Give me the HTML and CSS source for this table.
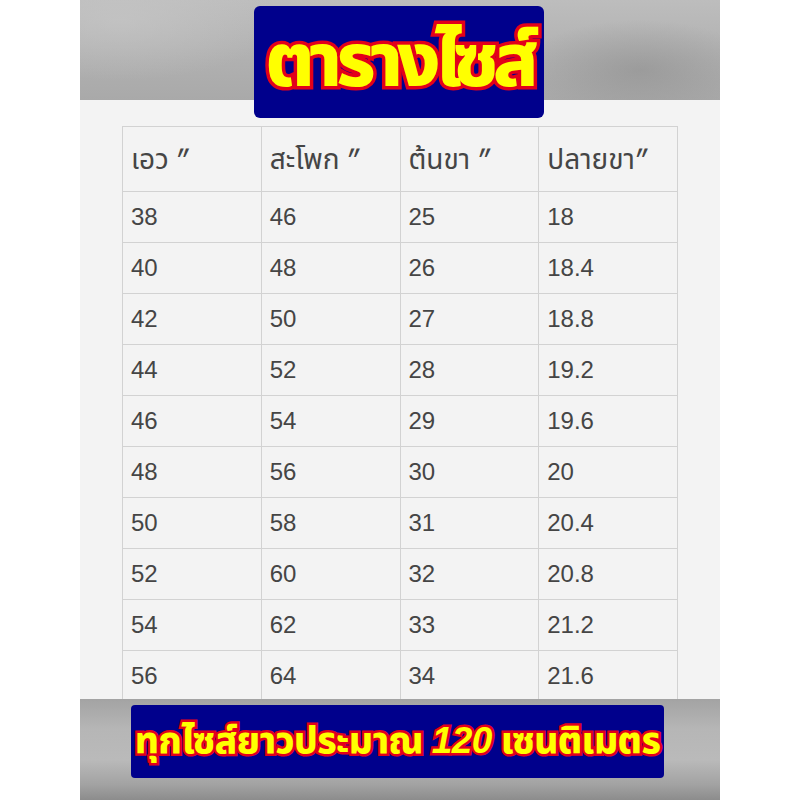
FILE: index.html
```html
<!DOCTYPE html>
<html lang="th">
<head>
<meta charset="utf-8">
<title>ตารางไซส์</title>
<link rel="stylesheet" href="styles.css">
</head>
<body>
<div class="photo">
  <div class="top-band"></div>
  <div class="title-badge"><span class="title-text">ตารางไซส์</span></div>
  <main class="paper">
    <table class="size-table">
      <thead>
        <tr><th>เอว ″</th><th>สะโพก ″</th><th>ต้นขา ″</th><th>ปลายขา″</th></tr>
      </thead>
      <tbody>
        <tr><td>38</td><td>46</td><td>25</td><td>18</td></tr>
        <tr><td>40</td><td>48</td><td>26</td><td>18.4</td></tr>
        <tr><td>42</td><td>50</td><td>27</td><td>18.8</td></tr>
        <tr><td>44</td><td>52</td><td>28</td><td>19.2</td></tr>
        <tr><td>46</td><td>54</td><td>29</td><td>19.6</td></tr>
        <tr><td>48</td><td>56</td><td>30</td><td>20</td></tr>
        <tr><td>50</td><td>58</td><td>31</td><td>20.4</td></tr>
        <tr><td>52</td><td>60</td><td>32</td><td>20.8</td></tr>
        <tr><td>54</td><td>62</td><td>33</td><td>21.2</td></tr>
        <tr><td>56</td><td>64</td><td>34</td><td>21.6</td></tr>
      </tbody>
    </table>
  </main>
  <footer class="bottom-band">
    <div class="note"><span class="note-text">ทุกไซส์ยาวประมาณ <em class="num">120</em> เซนติเมตร</span></div>
  </footer>
</div>
</body>
</html>
```
FILE: styles.css
```css
html, body {
  margin: 0;
  padding: 0;
  background: #ffffff;
}
.photo {
  position: relative;
  width: 640px;
  height: 800px;
  margin: 0 auto;
  display: flex;
  flex-direction: column;
  overflow: hidden;
}
.top-band {
  height: 100px;
  flex: none;
  background:
    radial-gradient(ellipse 120px 50px at 560px 70px, rgba(140,140,140,0.55), rgba(140,140,140,0) 100%),
    radial-gradient(ellipse 160px 60px at 40px 20px, rgba(200,200,200,0.6), rgba(200,200,200,0) 100%),
    linear-gradient(to bottom, #bdbdbd 0%, #b0b0b0 60%, #a9a9a9 100%);
}
.title-badge {
  position: absolute;
  left: 174px;
  top: 6px;
  width: 290px;
  height: 112px;
  background: #00008c;
  border-radius: 6px;
  display: flex;
  align-items: center;
  justify-content: center;
}
.title-text {
  font-family: "Noto Sans Thai", "Loma", "Garuda", "Noto Sans", sans-serif;
  font-weight: 800;
  font-size: 75px;
  line-height: 1;
  color: #ffff00;
  -webkit-text-stroke: 7px #e3001a;
  paint-order: stroke fill;
  letter-spacing: -6px;
  white-space: nowrap;
  padding-top: 2px;
}
.paper {
  height: 599px;
  flex: none;
  overflow: hidden;
  background: #f3f3f3;
  padding: 26px 0 0 42px;
  box-sizing: border-box;
}
.size-table {
  border-collapse: collapse;
  width: 556px;
  table-layout: fixed;
  font-family: "Liberation Sans", "Noto Sans Thai", "Loma", "Garuda", sans-serif;
  color: #454545;
  font-size: 24px;
}
.size-table th,
.size-table td {
  border: 1px solid #d2d2d2;
  padding: 0 0 0 8px;
  text-align: left;
  font-weight: 400;
}
.size-table th {
  height: 65px;
  vertical-align: top;
  padding-top: 10px;
  box-sizing: border-box;
  font-size: 28px;
  font-family: "Noto Sans Thai", "Loma", "Garuda", "Liberation Sans", sans-serif;
  white-space: nowrap;
}
.size-table td {
  height: 50px;
  vertical-align: middle;
}
.bottom-band {
  flex: 1;
  padding: 6px 0 0 51px;
  box-sizing: border-box;
  background: linear-gradient(to bottom, #a3a3a3 0%, #b6b6b6 30%, #bababa 60%, #a2a2a2 85%, #8c8c8c 100%);
}
.note {
  width: 533px;
  height: 73px;
  background: #00008c;
  border-radius: 4px;
  display: flex;
  align-items: center;
  justify-content: center;
}
.note-text {
  font-family: "Noto Sans Thai", "Loma", "Garuda", "Noto Sans", sans-serif;
  font-weight: 800;
  font-size: 37px;
  line-height: 1;
  color: #ffff00;
  -webkit-text-stroke: 5px #e3001a;
  paint-order: stroke fill;
  white-space: nowrap;
  letter-spacing: -0.6px;
}
.num {
  font-family: "Liberation Sans", sans-serif;
  font-style: italic;
  font-weight: 700;
}
```
